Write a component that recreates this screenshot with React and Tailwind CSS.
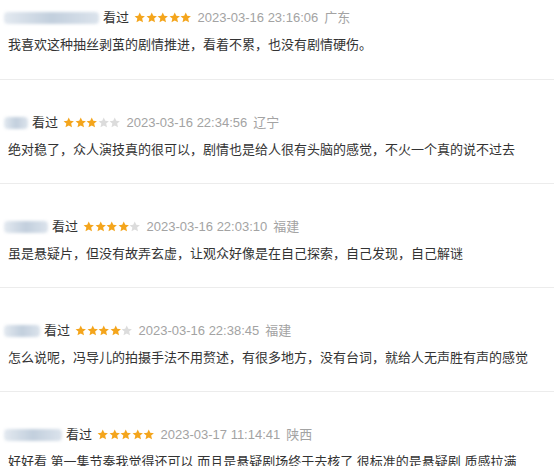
import React from 'react'

const reviews = [
  {
    nameW: 'w-[95px]',
    stars: 5,
    time: '2023-03-16 23:16:06',
    loc: '广东',
    text: '我喜欢这种抽丝剥茧的剧情推进，看着不累，也没有剧情硬伤。',
  },
  {
    nameW: 'w-[24px]',
    stars: 3,
    time: '2023-03-16 22:34:56',
    loc: '辽宁',
    text: '绝对稳了，众人演技真的很可以，剧情也是给人很有头脑的感觉，不火一个真的说不过去',
  },
  {
    nameW: 'w-[44px]',
    stars: 4,
    time: '2023-03-16 22:03:10',
    loc: '福建',
    text: '虽是悬疑片，但没有故弄玄虚，让观众好像是在自己探索，自己发现，自己解谜',
  },
  {
    nameW: 'w-[36px]',
    stars: 4,
    time: '2023-03-16 22:38:45',
    loc: '福建',
    text: '怎么说呢，冯导儿的拍摄手法不用赘述，有很多地方，没有台词，就给人无声胜有声的感觉',
  },
  {
    nameW: 'w-[58px]',
    stars: 5,
    time: '2023-03-17 11:14:41',
    loc: '陕西',
    text: '好好看 第一集节奏我觉得还可以 而且是悬疑剧场终于去核了 很标准的是悬疑剧 质感拉满',
  },
]

function Star({ on }) {
  return (
    <svg viewBox="0 0 24 24" className="w-[11.5px] h-[11.5px]">
      <path
        d="M12 1l3.2 7 7.6.7-5.8 5.1 1.8 7.6L12 17.5l-6.8 3.9 1.8-7.6-5.8-5.1 7.6-.7z"
        fill={on ? '#f4a51c' : '#dcdcdc'}
      />
    </svg>
  )
}

function Review({ r, first }) {
  return (
    <div className={`border-b border-[#ececec] pl-[8px] ${first ? 'pt-[8px] pb-[24px]' : 'pt-[33px] pb-[23px]'}`}>
      <div className="flex items-center h-[20px] text-[13px] -ml-[4px]">
        <div className={`${r.nameW} h-[12px] rounded-sm bg-gradient-to-r from-[#e3e9f0] via-[#c2cfdd] to-[#dbe3ec] blur-[1.5px]`} />
        <span className="ml-[4px] text-[#333]">看过</span>
        <span className="ml-[5px] flex">
          {[0, 1, 2, 3, 4].map(i => (
            <Star key={i} on={i < r.stars} />
          ))}
        </span>
        <span className="ml-[6px] text-[#a3a3a3]">{r.time}</span>
        <span className="ml-[6px] text-[#a3a3a3]">{r.loc}</span>
      </div>
      <div className="mt-[7px] h-[20px] leading-[20px] text-[13px] text-[#333] whitespace-nowrap">
        {r.text}
      </div>
    </div>
  )
}

export default function App() {
  return (
    <div
      className="w-[554px] h-[466px] overflow-hidden bg-white"
      style={{ fontFamily: '"Liberation Sans", "Noto Sans CJK SC", sans-serif' }}
    >
      {reviews.map((r, i) => (
        <Review key={i} r={r} first={i === 0} />
      ))}
    </div>
  )
}
